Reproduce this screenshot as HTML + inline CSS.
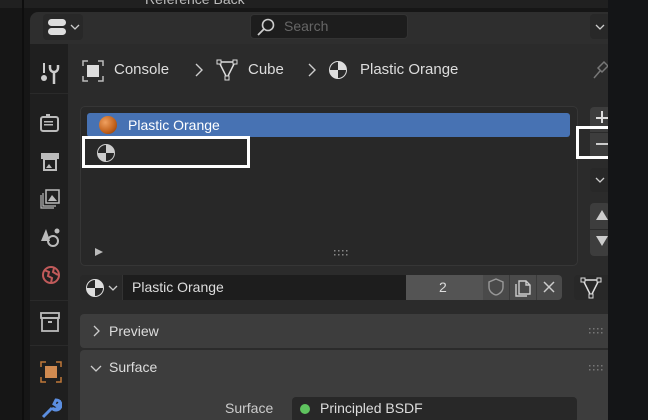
<!DOCTYPE html>
<html><head><style>
*{margin:0;padding:0;box-sizing:border-box}
html,body{width:648px;height:420px;overflow:hidden}
body{background:#161616;font-family:"Liberation Sans",sans-serif;color:#ddd;position:relative;font-size:14px}
.a{position:absolute}
.t{position:absolute;white-space:nowrap}
</style></head><body>
<div class="a" style="left:0;top:0;width:648px;height:8px;background:#202020"></div>
<div class="t" style="left:145px;top:-9px;color:#bbb;font-size:14px">Reference Back</div>
<div class="a" style="left:22px;top:0;width:2px;height:420px;background:#0e0e0e"></div>
<div class="a" style="left:30px;top:12px;width:590px;height:408px;background:#2e2e2e;border-radius:8px 0 0 0"></div>
<div class="a" style="left:30px;top:44px;width:38px;height:376px;background:#1f1f1f"></div>
<div class="a" style="left:68px;top:44px;width:540px;height:376px;background:#2b2b2b"></div>
<!-- header -->
<div class="a" style="left:43px;top:14px;width:40px;height:26px;background:#282828;border-radius:4px"></div>
<div class="a" style="left:48px;top:19px;width:18px;height:7px;border-radius:4px;background:#ddd"></div>
<div class="a" style="left:48px;top:28px;width:18px;height:7px;border-radius:4px;background:#ddd"></div>
<svg class="a" style="left:70px;top:24px" width="10" height="6"><path d="M1 1l4 4 4-4" fill="none" stroke="#ccc" stroke-width="1.3"/></svg>
<div class="a" style="left:250px;top:14px;width:158px;height:25px;background:#1d1d1d;border-radius:4px;border:1px solid #333"></div>
<svg class="a" style="left:256px;top:17px" width="20" height="20"><circle cx="12" cy="8" r="5.5" fill="none" stroke="#ccc" stroke-width="1.6"/><line x1="8" y1="12" x2="2" y2="18" stroke="#ccc" stroke-width="1.8"/></svg>
<div class="t" style="left:284px;top:18px;color:#666;font-size:14px">Search</div>
<div class="a" style="left:590px;top:14px;width:20px;height:25px;background:#282828;border-radius:4px"></div>
<svg class="a" style="left:595px;top:24px" width="10" height="6"><path d="M1 1l4 4 4-4" fill="none" stroke="#ccc" stroke-width="1.3"/></svg>
<!-- breadcrumb -->
<svg class="a" style="left:82px;top:60px" width="22" height="22"><path d="M1 6V1h5M16 1h5v5M21 16v5h-5M6 21H1v-5" fill="none" stroke="#bbb" stroke-width="1.5"/><rect x="5" y="5" width="12" height="12" fill="#ddd"/></svg>
<div class="t" style="left:114px;top:61px;color:#ddd;font-size:15px">Console</div>
<svg class="a" style="left:195px;top:63px" width="8" height="14"><path d="M1 1l6 6-6 6" fill="none" stroke="#ccc" stroke-width="1.4"/></svg>
<svg class="a" style="left:216px;top:59px" width="22" height="22"><path d="M3 3L11 19L19 3Z" fill="none" stroke="#ddd" stroke-width="1.5"/><rect x="1" y="1" width="4" height="4" fill="#2b2b2b" stroke="#ddd"/><rect x="17" y="1" width="4" height="4" fill="#2b2b2b" stroke="#ddd"/><rect x="9" y="17" width="4" height="4" fill="#2b2b2b" stroke="#ddd"/></svg>
<div class="t" style="left:248px;top:61px;color:#ddd;font-size:15px">Cube</div>
<svg class="a" style="left:308px;top:63px" width="8" height="14"><path d="M1 1l6 6-6 6" fill="none" stroke="#ccc" stroke-width="1.4"/></svg>
<svg class="a" style="left:328px;top:60px" width="20" height="20"><circle cx="10" cy="10" r="8.5" fill="#ddd"/><path d="M10 10H18.5A8.5 8.5 0 0 1 10 18.5Z" fill="#2b2b2b"/><path d="M10 10H1.5A8.5 8.5 0 0 1 10 1.5Z" fill="#2b2b2b"/><circle cx="10" cy="10" r="8.5" fill="none" stroke="#ddd"/></svg>
<div class="t" style="left:360px;top:61px;color:#ddd;font-size:15px">Plastic Orange</div>
<svg class="a" style="left:592px;top:60px" width="16" height="20"><path d="M2 18L8 11M6 8l6-6 4 4-6 6z" fill="none" stroke="#777" stroke-width="1.5"/></svg>
<!-- sidebar icons -->
<svg class="a" style="left:40px;top:63px" width="20" height="22"><rect x="3" y="0" width="2" height="10" fill="#ccc"/><circle cx="4" cy="15" r="3" fill="#ccc"/><path d="M10 2v3a4 4 0 0 0 8 0V2M14 8v13" fill="none" stroke="#ccc" stroke-width="2.5"/></svg>
<div class="a" style="left:30px;top:93px;width:38px;height:1px;background:#2a2a2a"></div>
<svg class="a" style="left:40px;top:113px" width="20" height="20"><rect x="1" y="4" width="17" height="14" rx="2" fill="none" stroke="#bbb" stroke-width="2"/><rect x="4" y="8" width="9" height="1.5" fill="#bbb"/><rect x="4" y="11" width="9" height="1.5" fill="#bbb"/><rect x="6" y="1" width="4" height="3" fill="#bbb"/></svg>
<svg class="a" style="left:40px;top:152px" width="20" height="20"><rect x="1" y="1" width="18" height="6" fill="#bbb"/><rect x="4" y="7" width="12" height="11" fill="none" stroke="#bbb" stroke-width="2"/><path d="M6 16l3-4 3 4z" fill="#bbb"/></svg>
<svg class="a" style="left:40px;top:189px" width="20" height="20"><rect x="6" y="1" width="13" height="13" fill="none" stroke="#bbb" stroke-width="1.5"/><path d="M3 4v13h13M1 6v13h13" fill="none" stroke="#bbb" stroke-width="1.2"/><path d="M8 12l4-6 5 6z" fill="#bbb"/></svg>
<svg class="a" style="left:40px;top:227px" width="22" height="22"><path d="M6 2L1 14h9z" fill="#bbb"/><circle cx="13" cy="14" r="5" fill="none" stroke="#bbb" stroke-width="2"/><circle cx="17" cy="4" r="2.5" fill="#bbb"/></svg>
<svg class="a" style="left:40px;top:264px" width="22" height="22"><circle cx="11" cy="11" r="8" fill="none" stroke="#c05a5a" stroke-width="2"/><path d="M4 6l5 2-1 4 4 2-1 5M14 4l-1 4 5 3" fill="none" stroke="#c05a5a" stroke-width="2"/></svg>
<div class="a" style="left:30px;top:300px;width:38px;height:1px;background:#2a2a2a"></div>
<svg class="a" style="left:40px;top:312px" width="20" height="20"><rect x="1" y="1" width="18" height="5" fill="none" stroke="#bbb" stroke-width="1.8"/><rect x="2" y="6" width="16" height="13" fill="none" stroke="#bbb" stroke-width="1.8"/><rect x="8" y="9" width="4" height="2" fill="#bbb"/></svg>
<div class="a" style="left:30px;top:345px;width:38px;height:1px;background:#2a2a2a"></div>
<svg class="a" style="left:40px;top:361px" width="22" height="22"><path d="M1 6V1h5M16 1h5v5M21 16v5h-5M6 21H1v-5" fill="none" stroke="#c07838" stroke-width="1.5"/><rect x="5" y="5" width="12" height="12" fill="#d08a50"/></svg>
<svg class="a" style="left:40px;top:398px" width="22" height="22"><path d="M3 19L12 10M12 10a5 5 0 1 0 4-8l-2 4 3 2 3-3a5 5 0 0 1-8 5" fill="none" stroke="#5b8ee0" stroke-width="3"/></svg>
<!-- list box -->
<div class="a" style="left:80px;top:106px;width:498px;height:160px;background:#282828;border:1px solid #363636;border-radius:5px"></div>
<div class="a" style="left:87px;top:113px;width:483px;height:24px;background:#4772b3;border-radius:3px"></div>
<div class="a" style="left:99px;top:116px;width:18px;height:18px;border-radius:50%;background:radial-gradient(circle at 35% 35%,#f0a060,#c0601a 60%,#7a3408)"></div>
<div class="t" style="left:128px;top:117px;color:#fff;font-size:14px">Plastic Orange</div>
<div class="a" style="left:82px;top:136px;width:168px;height:32px;border:3px solid #fff"></div>
<svg class="a" style="left:96px;top:143px" width="20" height="20"><circle cx="10" cy="10" r="8.5" fill="#ccc"/><path d="M10 10H18.5A8.5 8.5 0 0 1 10 18.5Z" fill="#282828"/><path d="M10 10H1.5A8.5 8.5 0 0 1 10 1.5Z" fill="#282828"/><circle cx="10" cy="10" r="8.5" fill="none" stroke="#ccc"/></svg>
<svg class="a" style="left:95px;top:248px" width="8" height="8"><path d="M0 0L8 4L0 8Z" fill="#bbb"/></svg>
<svg class="a" style="left:334px;top:250px" width="16" height="6" fill="#888"><rect x="0" y="0" width="1.5" height="1.5"/><rect x="4" y="0" width="1.5" height="1.5"/><rect x="8" y="0" width="1.5" height="1.5"/><rect x="12" y="0" width="1.5" height="1.5"/><rect x="0" y="4" width="1.5" height="1.5"/><rect x="4" y="4" width="1.5" height="1.5"/><rect x="8" y="4" width="1.5" height="1.5"/><rect x="12" y="4" width="1.5" height="1.5"/></svg>
<!-- right buttons -->
<div class="a" style="left:590px;top:107px;width:20px;height:52px;background:#3d3d3d;border-radius:4px 0 0 4px"></div>
<div class="a" style="left:596px;top:117px;width:12px;height:1.5px;background:#ddd"></div>
<div class="a" style="left:601px;top:111px;width:1.5px;height:12px;background:#ddd"></div>
<div class="a" style="left:590px;top:132px;width:20px;height:1px;background:#2b2b2b"></div>
<div class="a" style="left:576px;top:126px;width:42px;height:33px;border:3px solid #fff"></div>
<div class="a" style="left:596px;top:143px;width:12px;height:1.5px;background:#ccc"></div>
<div class="a" style="left:590px;top:168px;width:20px;height:24px;background:#282828;border-radius:4px"></div>
<svg class="a" style="left:595px;top:177px" width="10" height="6"><path d="M1 1l4 4 4-4" fill="none" stroke="#ccc" stroke-width="1.3"/></svg>
<div class="a" style="left:590px;top:203px;width:20px;height:53px;background:#3d3d3d;border-radius:4px"></div>
<svg class="a" style="left:596px;top:210px" width="12" height="10"><path d="M0 10L6 0L12 10Z" fill="#ccc"/></svg>
<div class="a" style="left:590px;top:229px;width:20px;height:1px;background:#2b2b2b"></div>
<svg class="a" style="left:596px;top:236px" width="12" height="10"><path d="M0 0L6 10L12 0Z" fill="#ccc"/></svg>
<!-- slot bar -->
<div class="a" style="left:80px;top:275px;width:42px;height:25px;background:#282828;border-radius:4px 0 0 4px"></div>
<svg class="a" style="left:85px;top:278px" width="20" height="20"><circle cx="10" cy="10" r="8.5" fill="#ddd"/><path d="M10 10H18.5A8.5 8.5 0 0 1 10 18.5Z" fill="#282828"/><path d="M10 10H1.5A8.5 8.5 0 0 1 10 1.5Z" fill="#282828"/><circle cx="10" cy="10" r="8.5" fill="none" stroke="#ddd"/></svg>
<svg class="a" style="left:108px;top:285px" width="10" height="6"><path d="M1 1l4 4 4-4" fill="none" stroke="#ccc" stroke-width="1.3"/></svg>
<div class="a" style="left:122px;top:275px;width:284px;height:25px;background:#1d1d1d;border-left:1px solid #333"></div>
<div class="t" style="left:132px;top:279px;color:#ddd;font-size:14px">Plastic Orange</div>
<div class="a" style="left:406px;top:275px;width:77px;height:25px;background:#545454"></div>
<div class="t" style="left:439px;top:279px;color:#ddd;font-size:14px">2</div>
<div class="a" style="left:483px;top:275px;width:79px;height:25px;background:#4a4a4a;border-radius:0 4px 4px 0"></div>
<div class="a" style="left:509px;top:275px;width:1px;height:25px;background:#3a3a3a"></div>
<div class="a" style="left:536px;top:275px;width:1px;height:25px;background:#3a3a3a"></div>
<svg class="a" style="left:486px;top:277px" width="20" height="20"><path d="M10 2L3 5v5c0 4 3 7 7 8 4-1 7-4 7-8V5z" fill="none" stroke="#999" stroke-width="1.4"/></svg>
<svg class="a" style="left:513px;top:277px" width="20" height="20"><path d="M6 4h7l4 4v9H6z M13 4v4h4 M3 7v12h11" fill="none" stroke="#ccc" stroke-width="1.4"/></svg>
<svg class="a" style="left:543px;top:281px" width="12" height="12"><path d="M1 1l10 10M11 1L1 11" stroke="#ccc" stroke-width="1.5"/></svg>
<div class="a" style="left:574px;top:275px;width:40px;height:25px;background:#282828;border-radius:4px"></div>
<svg class="a" style="left:580px;top:277px" width="22" height="22"><path d="M3 3L11 19L19 3Z" fill="none" stroke="#ddd" stroke-width="1.5"/><rect x="1" y="1" width="4" height="4" fill="#282828" stroke="#ddd"/><rect x="17" y="1" width="4" height="4" fill="#282828" stroke="#ddd"/><rect x="9" y="17" width="4" height="4" fill="#282828" stroke="#ddd"/></svg>
<!-- panels -->
<div class="a" style="left:80px;top:314px;width:540px;height:34px;background:#3d3d3d;border-radius:4px"></div>
<svg class="a" style="left:93px;top:325px" width="7" height="12"><path d="M1 1l5 5-5 5" fill="none" stroke="#ccc" stroke-width="1.3"/></svg>
<div class="t" style="left:109px;top:323px;color:#ddd;font-size:14px">Preview</div>
<svg class="a" style="left:589px;top:328px" width="16" height="6" fill="#777"><rect x="0" y="0" width="1.5" height="1.5"/><rect x="4" y="0" width="1.5" height="1.5"/><rect x="8" y="0" width="1.5" height="1.5"/><rect x="12" y="0" width="1.5" height="1.5"/><rect x="0" y="4" width="1.5" height="1.5"/><rect x="4" y="4" width="1.5" height="1.5"/><rect x="8" y="4" width="1.5" height="1.5"/><rect x="12" y="4" width="1.5" height="1.5"/></svg>
<div class="a" style="left:80px;top:350px;width:540px;height:80px;background:#3d3d3d;border-radius:4px"></div>
<svg class="a" style="left:90px;top:365px" width="12" height="7"><path d="M1 1l5 5 5-5" fill="none" stroke="#ccc" stroke-width="1.3"/></svg>
<div class="t" style="left:109px;top:359px;color:#ddd;font-size:14px">Surface</div>
<svg class="a" style="left:589px;top:365px" width="16" height="6" fill="#777"><rect x="0" y="0" width="1.5" height="1.5"/><rect x="4" y="0" width="1.5" height="1.5"/><rect x="8" y="0" width="1.5" height="1.5"/><rect x="12" y="0" width="1.5" height="1.5"/><rect x="0" y="4" width="1.5" height="1.5"/><rect x="4" y="4" width="1.5" height="1.5"/><rect x="8" y="4" width="1.5" height="1.5"/><rect x="12" y="4" width="1.5" height="1.5"/></svg>
<div class="t" style="left:225px;top:400px;color:#ccc;font-size:14px">Surface</div>
<div class="a" style="left:292px;top:397px;width:285px;height:26px;background:#282828;border-radius:4px"></div>
<div class="a" style="left:300px;top:404px;width:10px;height:10px;border-radius:50%;background:#5fc45f"></div>
<div class="t" style="left:320px;top:400px;color:#ddd;font-size:14px">Principled BSDF</div>
<div class="a" style="left:608px;top:0;width:40px;height:420px;background:#141517"></div>
</body></html>
